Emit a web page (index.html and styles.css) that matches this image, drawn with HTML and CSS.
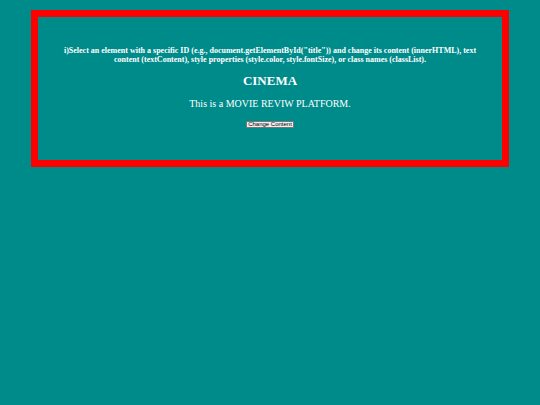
FILE: index.html
```html
<!DOCTYPE html>
<html>
<head>
<meta charset="utf-8">
<title>CINEMA</title>
<link rel="stylesheet" href="styles.css">
</head>
<body>
<div class="box">
  <p class="intro">i)Select an element with a specific ID (e.g., document.getElementById("title")) and change its content (innerHTML), text content (textContent), style properties (style.color, style.fontSize), or class names (classList).</p>
  <h1 class="title" id="title">CINEMA</h1>
  <p class="tagline">This is a MOVIE REVIW PLATFORM.</p>
  <div class="actions">
    <button class="btn" type="button">Change Content</button>
  </div>
</div>
</body>
</html>
```
FILE: styles.css
```css
html, body {
  background: #008b8b;
}
body {
  margin: 8px;
  font-family: "Liberation Serif", serif;
  color: #ffffff;
}
.box {
  margin: 2px 23px;
  border: 7px solid #ff0000;
  padding: 29px 20px 32px;
  text-align: center;
}
.intro {
  margin: 0;
  font-size: 8px;
  line-height: 9.2px;
  font-weight: bold;
}
.title {
  margin: 9px 0 0;
  font-size: 13px;
  line-height: 16px;
  font-weight: bold;
}
.tagline {
  margin: 8px 0 0;
  font-size: 10px;
  line-height: 13px;
}
.actions {
  margin-top: 11px;
  line-height: 0;
  font-size: 0;
}
.btn {
  font-family: "Liberation Sans", Arial, sans-serif;
  font-size: 6px;
  line-height: 5px;
  padding: 0 1px;
  color: #000;
  background: #efefef;
  border: 1px solid #767676;
  border-radius: 1px;
  vertical-align: top;
}
```
